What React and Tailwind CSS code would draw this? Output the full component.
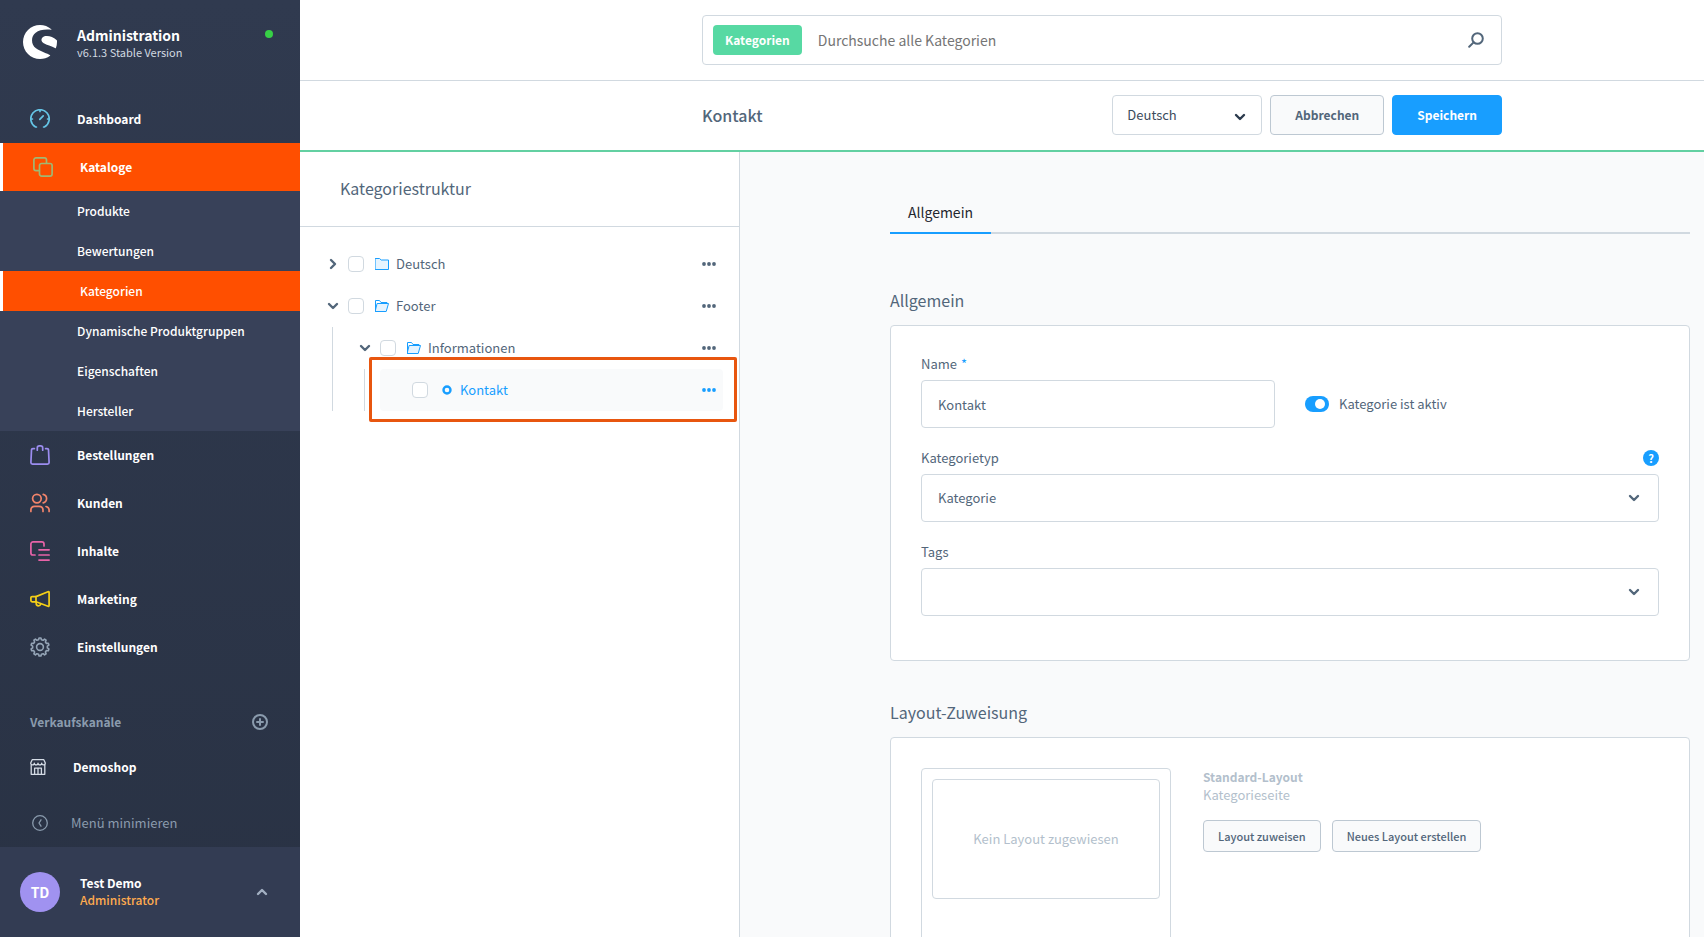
import { useState } from "react";
import { SiShopware } from "react-icons/si";

const FONT = "font-['Noto_Sans_CJK_SC','Noto_Sans',sans-serif]";

function Icon({ children, size = 20, className = "", width = 1.7 }) {
    return (
        <svg width={size} height={size} viewBox={`0 0 ${size} ${size}`} fill="none" stroke="currentColor" strokeWidth={width} strokeLinecap="round" strokeLinejoin="round" className={`shrink-0 ${className}`} aria-hidden="true">
            {children}
        </svg>
    );
}

const DashboardIcon = () => (
    <Icon className="text-[#65c5e6]">
        <path d="M6.4 18H5.6A9.2 9.2 0 1 1 14.4 18H13.6" />
        <path d="M10 1v1.4M1 10h1.4M17.6 10H19M9.8 10.4l3.4-3.6" />
    </Icon>
);

const CatalogIcon = () => (
    <Icon className="text-[#a0b873]">
        <path d="M6.2 13.6H3a2.1 2.1 0 0 1-2.1-2.1V3A2.1 2.1 0 0 1 3 .9h8.4A2.1 2.1 0 0 1 13.5 3v3.2" />
        <rect x="6.5" y="6.5" width="12.6" height="12.6" rx="2.1" />
    </Icon>
);

const BagIcon = () => (
    <Icon className="text-[#9c8df0]">
        <path d="M4.4 3.6H2.9c-.8 0-1.4.5-1.4 1.3L.9 17.500c0 .9.6 1.600 1.600 1.600h15c1 0 1.600-.7 1.600-1.600l-.6-12.600c0-.8-.6-1.300-1.400-1.300h-1.500" />
        <path d="M7.300 5.200V2.900c0-1.200.8-2 2-2h1.400c1.200 0 2 .8 2 2v2.300" />
    </Icon>
);

const CustomersIcon = () => (
    <Icon className="text-[#f2846b]">
        <circle cx="6.9" cy="5.6" r="4.3" />
        <path d="M.9 18.5v-1.3c0-2.3 1.5-3.9 3.8-3.9h4.4c2.3 0 3.9 1.6 3.9 3.9v1.3" />
        <path d="M13.2 1.4a4.3 4.3 0 0 1 0 8.4M16 13.5c2 .4 3.1 1.8 3.1 3.7v1.3" />
    </Icon>
);

const ContentIcon = () => (
    <Icon className="text-[#e863a8]">
        <path d="M5 14H3a2.1 2.1 0 0 1-2.1-2.1V3A2.1 2.1 0 0 1 3 .9h8.9A2.1 2.1 0 0 1 14 3v2" />
        <path d="M9 8.8h10.1M9 14h10.1M9 19.1h10.1" />
    </Icon>
);

const MarketingIcon = () => (
    <Icon className="text-[#f5cf17]">
        <path d="M6 7.6 18 2.7c.7-.2 1.1.1 1.1.8v13c0 .7-.4 1-1.1.8L6 12.8z" />
        <path d="M6 7.6H2.1c-.7 0-1.2.5-1.2 1.2v2.8c0 .7.5 1.2 1.2 1.2H6M6.2 13v1.6c0 1.4.9 2.3 2.2 2.3 1.2 0 2-.6 2.3-1.8" />
    </Icon>
);

// ten teeth, two outer and two inner points each
const gear = Array.from({ length: 40 }, (_, i) => {
    const tooth = Math.floor(i / 4) * 36;
    const [angle, radius] = [[-11, 7.4], [-6, 9.1], [6, 9.1], [11, 7.4]][i % 4];
    const a = ((tooth + angle) * Math.PI) / 180;
    return `${(10 + radius * Math.sin(a)).toFixed(2)},${(10 - radius * Math.cos(a)).toFixed(2)}`;
}).join(" ");

const SettingsIcon = () => (
    <Icon className="text-[#94a4b6]" width={1.6}>
        <polygon points={gear} />
        <circle cx="10" cy="10" r="3.4" />
    </Icon>
);

const ShopIcon = () => (
    <Icon size={16} width={1.3} className="text-[#d5dce6]">
        <path d="M2.2.7h11.6l1.5 3.3c0 1.2-.8 1.9-1.8 1.9S11.7 5.2 11.7 4.2c0 1-.8 1.7-1.8 1.7S8 5.2 8 4.2c0 1-.8 1.7-1.9 1.7-1 0-1.8-.7-1.8-1.7 0 1-.8 1.7-1.8 1.7S.7 5.2.7 4z" />
        <path d="M1.2 6v9.3h13.6V6M4.6 15V9.2h6.8V15M8 9.2V15" />
    </Icon>
);

const Chevron = ({ className = "" }) => (
    <Icon size={12} width={2.4} className={className}>
        <path d="M2 4l4 4 4-4" />
    </Icon>
);

const subMenu = ["Produkte", "Bewertungen", "Kategorien", "Dynamische Produktgruppen", "Eigenschaften", "Hersteller"];

const menu = [
    { title: "Dashboard", icon: <DashboardIcon /> },
    { title: "Kataloge", icon: <CatalogIcon />, active: true, children: subMenu },
    { title: "Bestellungen", icon: <BagIcon /> },
    { title: "Kunden", icon: <CustomersIcon /> },
    { title: "Inhalte", icon: <ContentIcon /> },
    { title: "Marketing", icon: <MarketingIcon /> },
    { title: "Einstellungen", icon: <SettingsIcon /> },
];

function Sidebar() {
    return (
        <aside className="flex w-[300px] shrink-0 flex-col bg-gradient-to-b from-[#303a4f] to-[#293244] text-white">
            <div className="flex h-[95px] shrink-0 items-start pt-[25px] pr-[27px] pl-[23px]">
                <SiShopware size={34} className="shrink-0" />
                <div className="ml-5 flex-1">
                    <p className="text-[14px] leading-5 font-bold">Administration</p>
                    <p className="text-[11px] leading-[14px] text-[#d1d9e0]">v6.1.3 Stable Version</p>
                </div>
                <span className="mt-[5px] size-2 rounded-full bg-[#37d046]" />
            </div>
            <nav>
                <ul>
                    {menu.map(item => (
                        <li key={item.title}>
                            <a href="#" className={`flex h-12 items-center gap-[27px] pl-[30px] text-[12px] font-bold ${item.active ? "border-l-3 border-white bg-[#ff4f00]" : ""}`}>
                                {item.icon}
                                {item.title}
                            </a>
                            {item.children &&
                                <ul className="bg-[#384159]">
                                    {item.children.map(child => (
                                        <li key={child}>
                                            <a href="#" className={`flex h-10 items-center pl-[77px] text-[12px] font-medium ${child === "Kategorien" ? "border-l-3 border-white bg-[#ff4f00]" : ""}`}>{child}</a>
                                        </li>
                                    ))}
                                </ul>
                            }
                        </li>
                    ))}
                </ul>
            </nav>
            <div className="mt-[31px] flex h-10 items-center justify-between pr-8 pl-[30px] text-[#8a9bad]">
                <p className="text-[12px] font-bold">Verkaufskanäle</p>
                <button type="button" aria-label="Verkaufskanal hinzufügen">
                    <Icon size={16} width={2}>
                        <circle cx="8" cy="8" r="7" />
                        <path d="M8 5v6M5 8h6" />
                    </Icon>
                </button>
            </div>
            <a href="#" className="mt-px flex h-12 items-center gap-[27px] pl-[30px] text-[12px] font-bold">
                <ShopIcon />
                Demoshop
            </a>
            <button type="button" className="mt-auto flex h-12 items-center gap-[23px] pl-8 text-[13px] text-[#8a9bad]">
                <Icon size={16} width={1.3}>
                    <circle cx="8" cy="8" r="7.3" />
                    <path d="M9 4.8 7 8l2 3.2" />
                </Icon>
                Menü minimieren
            </button>
            <div className="flex h-[90px] shrink-0 items-center bg-[#333c53] pr-8 pl-5">
                <span className="flex size-10 items-center justify-center rounded-full bg-[#a092f0] text-[14px] font-bold">TD</span>
                <div className="ml-5 flex-1 pb-[2px] text-[12px] leading-[17px]">
                    <p className="font-bold">Test Demo</p>
                    <p className="font-medium text-[#ffab4f]">Administrator</p>
                </div>
                <button type="button" aria-label="Benutzermenü">
                    <Chevron className="rotate-180 text-[#a3b0c2]" />
                </button>
            </div>
        </aside>
    );
}

function Header() {
    return (
        <header className="shrink-0 bg-white">
            <div className="flex h-[81px] items-center justify-center border-b border-[#d1d9e0] pl-[200px]">
                <label className="flex h-[50px] w-full max-w-[800px] items-center rounded border border-[#d1d9e0] pr-[17px] pl-[10px]">
                    <span className="flex h-[30px] items-center rounded bg-[#57d9a3] px-3 text-[12px] font-bold text-white">Kategorien</span>
                    <input type="text" placeholder="Durchsuche alle Kategorien" aria-label="Suche" className="ml-4 h-full flex-1 text-[14px] outline-none placeholder:text-[#757575]" />
                    <Icon size={16} width={2} className="text-[#52667a]">
                        <circle cx="9.5" cy="6.5" r="5.3" />
                        <path d="M5.6 10.4 1.2 14.8" />
                    </Icon>
                </label>
            </div>
            <div className="flex h-[71px] items-start justify-center border-b-2 border-[#63d0a2] pt-[14px] pl-[200px]">
                <div className="flex w-full max-w-[800px] items-center gap-2">
                    <h1 className="flex-1 text-[16px] font-medium text-[#52667a]">Kontakt</h1>
                    <div className="relative w-[150px]">
                        <select aria-label="Sprache" className="h-10 w-full appearance-none rounded border border-[#d1d9e0] bg-white pl-[14px] text-[13px] text-[#3d4c5c]">
                            <option>Deutsch</option>
                        </select>
                        <Chevron className="pointer-events-none absolute top-4 right-4 text-[#2b3a4d]" />
                    </div>
                    <button type="button" className="h-10 rounded border border-[#bdc8d2] bg-[#f9fafb] px-6 text-[12px] font-bold text-[#52667a]">Abbrechen</button>
                    <button type="button" className="h-10 rounded border border-[#189eff] bg-[#189eff] px-6 text-[12px] font-bold text-white">Speichern</button>
                </div>
            </div>
        </header>
    );
}

function FolderIcon({ open }) {
    return (
        <Icon size={14} width={1} className="text-[#189eff]">
            {open
                ? <>
                    <path d="M.5 12.5V1.5h4l1.500 2h6v1.500" />
                    <path d="M2.500 4.500h11l-2.300 8H.5z" fill="#e6f4ff" />
                </>
                : <path d="M.5 1.500h4l1.700 1.500h7.300v9.500H.5z" fill="#e6f4ff" />
            }
        </Icon>
    );
}

const Dots = () => (
    <svg width="14" height="4" viewBox="0 0 14 4" fill="currentColor" aria-hidden="true">
        <circle cx="2" cy="2" r="1.9" />
        <circle cx="7" cy="2" r="1.9" />
        <circle cx="12" cy="2" r="1.9" />
    </svg>
);

const tree = [
    { name: "Deutsch", children: [], closed: true },
    { name: "Footer", children: [{ name: "Informationen", children: [{ name: "Kontakt" }] }] },
];

function TreeItem({ item }) {
    const leaf = !item.children;
    return (
        <li>
            <div className={`relative flex h-[42px] items-center pr-[7px] text-[13px] ${leaf ? "rounded bg-[#f9fafb] text-[#189eff]" : "text-[#52667a]"}`}>
                <span className="flex w-8 shrink-0 justify-start pl-[11px]">
                    {!leaf &&
                        <button type="button" aria-label={`${item.name} umschalten`}>
                            <Chevron className={item.closed ? "-rotate-90" : ""} />
                        </button>
                    }
                </span>
                <input type="checkbox" aria-label={item.name} className="size-4 shrink-0 appearance-none rounded border border-[#d1d9e0] bg-white" />
                <span className="ml-[11px] flex w-[21px] shrink-0">
                    {leaf
                        ? <Icon size={14} width={2.4}><circle cx="8" cy="7" r="3.5" /></Icon>
                        : <FolderIcon open={!item.closed} />
                    }
                </span>
                <a href="#" className="flex-1">{item.name}</a>
                <button type="button" aria-label="Aktionen"><Dots /></button>
                {leaf && <span className="pointer-events-none absolute -top-3 -right-[14px] -bottom-[11px] -left-[11px] rounded-xs border-3 border-[#e8560f]" />}
            </div>
            {item.children?.length > 0 &&
                <ul className="ml-4 border-l border-[#d1d9e0] pl-[15px]">
                    {item.children.map(child => <TreeItem key={child.name} item={child} />)}
                </ul>
            }
        </li>
    );
}

function SelectField({ id, label, options, help }) {
    return (
        <div className="mt-[22px]">
            <div className="flex h-4 items-center justify-between">
                <label htmlFor={id}>{label}</label>
                {help && <button type="button" aria-label="Hilfe" className="flex size-4 items-center justify-center rounded-full bg-[#189eff] text-[11px] font-bold text-white">?</button>}
            </div>
            <div className="relative mt-2">
                <select id={id} className="h-12 w-full appearance-none rounded border border-[#d1d9e0] bg-white px-4">
                    {options.map(o => <option key={o}>{o}</option>)}
                </select>
                <Chevron className="pointer-events-none absolute top-[18px] right-[19px]" />
            </div>
        </div>
    );
}

function Detail() {
    const [name, setName] = useState("Kontakt");
    const [active, setActive] = useState(true);
    return (
        <main className="min-w-0 flex-1 overflow-y-auto bg-[#f9fafb] pr-[14px] pl-[150px] text-[13px] text-[#52667a] [scrollbar-width:none]">
            <div className="mx-auto max-w-[800px]">
                <div className="mt-10 flex border-b-2 border-[#d1d9e0]">
                    <button type="button" className="-mb-[2px] h-[42px] border-b-2 border-[#189eff] px-[18px] text-[14px] text-[#1f262e]">Allgemein</button>
                </div>
                <h2 className="mt-[54px] text-[16px] leading-6">Allgemein</h2>
                <section className="mt-[13px] rounded border border-[#d1d9e0] bg-white px-[30px] pt-[30px] pb-11">
                    <div className="flex items-end gap-[30px]">
                        <div className="flex-1">
                            <label htmlFor="name" className="flex h-4 items-center">Name <span className="ml-1 text-[#189eff]">*</span></label>
                            <input id="name" type="text" value={name} onChange={e => setName(e.target.value)} className="mt-2 h-12 w-full rounded border border-[#d1d9e0] px-4 outline-none" />
                        </div>
                        <label className="flex h-12 flex-1 items-center gap-[10px]">
                            <input type="checkbox" checked={active} onChange={e => setActive(e.target.checked)} className="peer sr-only" />
                            <span className="flex h-4 w-6 items-center rounded-full bg-[#d1d9e0] px-1 peer-checked:justify-end peer-checked:bg-[#189eff]">
                                <span className="size-[10px] rounded-full bg-white" />
                            </span>
                            Kategorie ist aktiv
                        </label>
                    </div>
                    <SelectField id="type" label="Kategorietyp" options={["Kategorie"]} help />
                    <SelectField id="tags" label="Tags" options={[""]} />
                </section>
                <h2 className="mt-[39px] text-[16px] leading-6">Layout-Zuweisung</h2>
                <section className="mt-[13px] flex gap-8 rounded border border-[#d1d9e0] bg-white p-[30px]">
                    <div className="h-[340px] w-[250px] shrink-0 rounded border border-[#d1d9e0] p-[10px]">
                        <div className="flex h-[120px] items-center justify-center rounded border border-[#d1d9e0] text-[#b3bfcc]">Kein Layout zugewiesen</div>
                    </div>
                    <div className="leading-[18px] text-[#b3bfcc]">
                        <p className="text-[12px] leading-[18px] font-bold">Standard-Layout</p>
                        <p>Kategorieseite</p>
                        <div className="mt-4 flex gap-[11px] text-[11px] font-medium text-[#52667a]">
                            <button type="button" className="h-8 rounded border border-[#bdc8d2] bg-[#f9fafb] px-[14px]">Layout zuweisen</button>
                            <button type="button" className="h-8 rounded border border-[#bdc8d2] bg-[#f9fafb] px-[14px]">Neues Layout erstellen</button>
                        </div>
                    </div>
                </section>
            </div>
        </main>
    );
}

function App() {
    return (
        <div className={`flex h-screen overflow-hidden bg-white ${FONT}`}>
            <Sidebar />
            <div className="flex min-w-0 flex-1 flex-col">
                <Header />
                <div className="flex min-h-0 flex-1">
                    <div className="w-[440px] shrink-0 border-r border-[#d1d9e0] bg-white">
                        <h2 className="flex h-[75px] items-center border-b border-[#d1d9e0] pb-[2px] pl-10 text-[16px] text-[#52667a]">Kategoriestruktur</h2>
                        <ul className="p-4">
                            {tree.map(item => <TreeItem key={item.name} item={item} />)}
                        </ul>
                    </div>
                    <Detail />
                </div>
            </div>
        </div>
    );
}

export default App;
